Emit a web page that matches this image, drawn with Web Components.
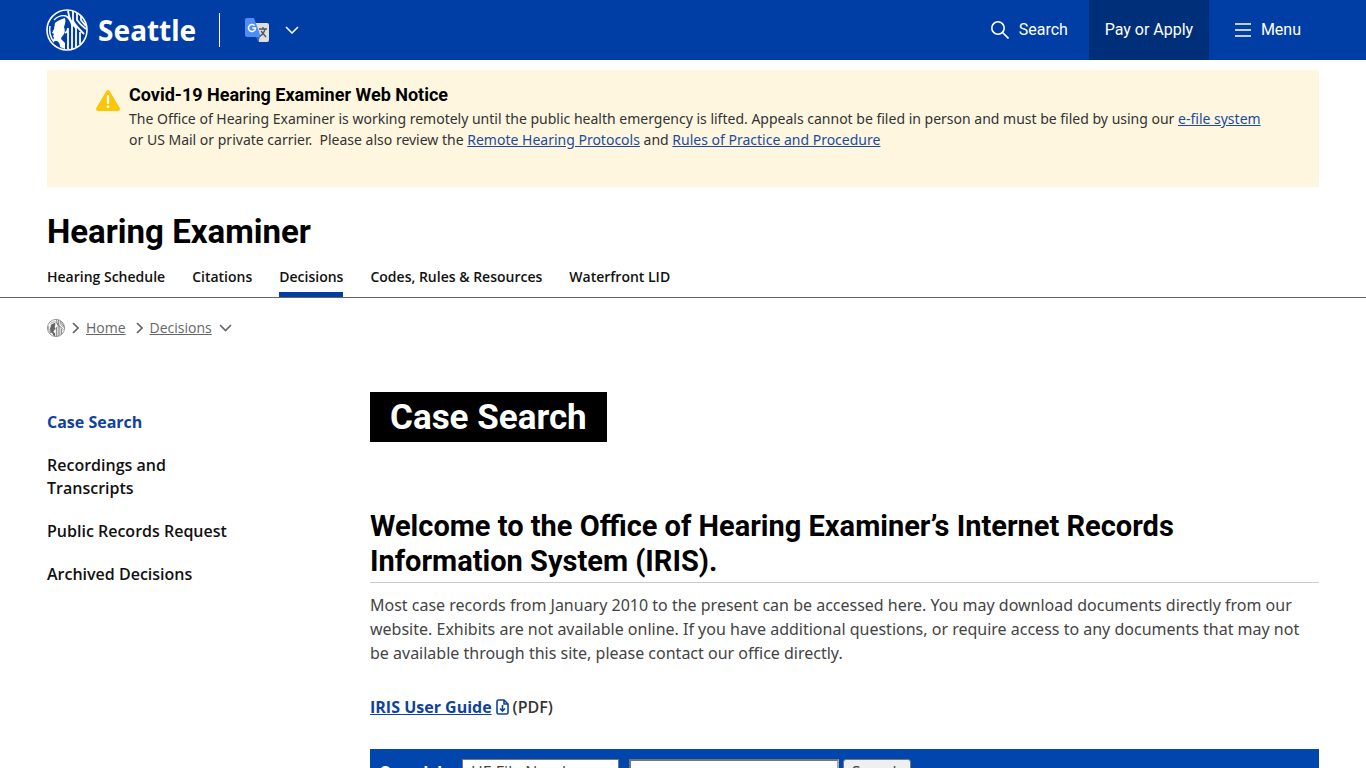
<!DOCTYPE html>
<html lang="en">
<head>
<meta charset="utf-8">
<meta name="viewport" content="width=device-width, initial-scale=1">
<title>Case Search - Hearing Examiner</title>
<style>
:root{--blue:#003da5;--navy:#002f7a;--gutter:47px;--display:Roboto,"Noto Sans",sans-serif}
body{margin:0;background:#fff;color:#444;font:16px/24px "Open Sans",sans-serif}
</style>
</head>
<body>
<seattle-page></seattle-page>
<script>
function define(name, html){
  const t=document.createElement('template');
  t.innerHTML='<style>*{box-sizing:border-box}:host{display:block}</style>'+html;
  customElements.define(name,class extends HTMLElement{
    constructor(){super();this.attachShadow({mode:'open'}).append(t.content.cloneNode(true));}
  });
}

define('city-seal',`
<style>:host{display:block;flex:none;width:42px;height:42px}svg{display:block;width:100%;height:100%}</style>
<svg viewBox="0 0 42 42" aria-hidden="true" fill="none" stroke="currentColor">
<circle cx="21" cy="21" r="20" stroke-width="1.6"/>
<path fill="currentColor" stroke="none" d="M9 14c2-2 6-4 10-5 1 3 0 6-1 9 1 3 1 5 0 7-1 2-3 3-3 5l4 4v6l-5-2c0-3-1-5-3-6l-3 0c-1-1-1-2 0-3l-1-2 1-2-2-1 2-4z"/>
<path stroke-width="1.4" d="M8 11c4-4 8-5 12-4M4 17c-1 6 0 11 4 16"/>
<path stroke-width="1.8" d="M22 20v20M26 16v24M30 18v20M34 23v12M20 7c3 2 5 5 6 9M22 2c1 7 4 13 8 17M27 2v10c2 4 5 7 11 13M31 4v7c2 3 5 6 9 9M35 7v4l5 6M19 24c2-1 3-2 3-5"/>
</svg>`);

define('site-header',`
<style>
:host{background:var(--blue);color:#fff}
header{display:flex;height:60px;padding:0 var(--gutter) 0 46px;align-items:center}
a,button{color:inherit;text-decoration:none;border:0;background:none;padding:0;font:16px/24px var(--display)}
.brand{display:flex;align-items:center;gap:10px;font:bold 28px/36px "Noto Sans",sans-serif;padding-right:23px;border-right:1px solid #fff;height:34px}
.lang{display:flex;align-items:center;gap:16px;margin-left:25px}
nav{display:flex;align-items:center;margin-left:auto}
.search{display:flex;align-items:center;gap:10px;margin-right:21px}
.pay{height:60px;width:120px;background:var(--navy);text-align:center;line-height:60px}
.menu{display:flex;align-items:center;gap:10px;margin:0 18px 0 26px}
svg{display:block}
</style>
<header>
<a class="brand" href="#"><city-seal></city-seal>Seattle</a>
<button class="lang" aria-label="Translate">
<svg width="24" height="24" viewBox="0 0 24 24"><path fill="#dedede" d="M9 5h13a2 2 0 0 1 2 2v15a2 2 0 0 1-2 2h-8z"/><path fill="#3167d4" d="M11 19h4l-2 5z"/><path fill="#4f8cf5" d="M2 0h7l7 19H2a2 2 0 0 1-2-2V2a2 2 0 0 1 2-2z"/><path d="M9.600 7.600A3.500 3.500 0 1 0 10.500 10H7.300" fill="none" stroke="#fff" stroke-width="1.500"/><path d="M14 11h8M18 9v2M20 11c-1 4-3 6-5 7M16 13l5 6" fill="none" stroke="#555" stroke-width="1.300"/></svg>
<svg width="14" height="8" viewBox="0 0 14 8"><path d="M1 1l6 6 6-6" fill="none" stroke="#fff" stroke-width="1.500"/></svg>
</button>
<nav aria-label="Main">
<button class="search"><svg width="18" height="18" viewBox="0 0 18 18" fill="none" stroke="#fff" stroke-width="1.600"><circle cx="7" cy="7" r="6.200"/><path d="M11.500 11.500l6 6"/></svg>Search</button>
<button class="pay">Pay or Apply</button>
<button class="menu"><svg width="16" height="14" viewBox="0 0 16 14"><path d="M0 1h16M0 7h16M0 13h16" stroke="#fff" stroke-width="1.600"/></svg>Menu</button>
</nav>
</header>`);

define('web-notice',`
<style>
:host{display:flex;gap:9px;margin:10px var(--gutter) 0;padding:12px 49px 37px;background:#fef6df;color:#333;font:14px/21px "Noto Sans",sans-serif}
svg{flex:none;margin-top:8px}
h2{margin:0;font:bold 18px/26px var(--display);color:#000}
p{margin:0}
</style>
<svg width="24" height="21" viewBox="0 0 24 21" aria-hidden="true"><path fill="#fac60a" d="M10.300 1a2 2 0 0 1 3.400 0l10 17a2 2 0 0 1-1.700 3H2a2 2 0 0 1-1.700-3z"/><path d="M12 6v7" stroke="#fff" stroke-width="2.200" stroke-linecap="round"/><circle cx="12" cy="16.800" r="1.400" fill="#fff"/></svg>
<div><h2><slot name="title"></slot></h2><p><slot></slot></p></div>`);

define('department-header',`
<style>
:host{border-bottom:1px solid #666;padding:25px var(--gutter) 0}
h1{margin:0 0 14px;font:bold 33px/40px var(--display);color:#000}
nav{display:flex;gap:27px}
a{display:block;color:#111;text-decoration:none;font-weight:600;font-size:14px;line-height:22px;padding-bottom:9px}
a[aria-current]{border-bottom:5px solid var(--blue);padding-bottom:4px}
</style>
<h1>Hearing Examiner</h1>
<nav aria-label="Department">
<a href="#">Hearing Schedule</a><a href="#">Citations</a><a href="#" aria-current="page">Decisions</a><a href="#">Codes, Rules &amp; Resources</a><a href="#">Waterfront LID</a>
</nav>`);

define('bread-crumbs',`
<style>
:host{display:flex;align-items:center;gap:7px;padding:20px var(--gutter);color:#666;font-size:14px;line-height:20px}
a{color:inherit}
city-seal{width:18px;height:18px}
.sep{margin-left:3px}
svg{fill:none;stroke:#666;stroke-width:1.700}
</style>
<city-seal></city-seal>
<svg width="7" height="12" viewBox="0 0 7 12"><path d="M1 1l5 5-5 5"/></svg>
<a href="#">Home</a>
<svg class="sep" width="7" height="12" viewBox="0 0 7 12"><path d="M1 1l5 5-5 5"/></svg>
<a href="#">Decisions</a>
<svg width="13" height="8" viewBox="0 0 13 8"><path d="M1 1l5.500 5.500L12 1"/></svg>`);

define('side-nav',`
<style>
nav{display:flex;flex-direction:column;gap:20px;padding-top:19px;max-width:180px}
a{color:#111;text-decoration:none;font-weight:600;font-size:16px;line-height:23px}
a[aria-current]{color:#0f429e;font-weight:700}
</style>
<nav aria-label="Section"><a href="#" aria-current="page">Case Search</a><a href="#">Recordings and Transcripts</a><a href="#">Public Records Request</a><a href="#">Archived Decisions</a></nav>`);

define('case-search-form',`
<style>
:host{background:#0046ad;color:#fff}
form{display:flex;align-items:center;padding:10px}
label{font:bold 17px/26px var(--display)}
select,input,button{height:26px;font:16px/22px "Open Sans",sans-serif;color:#444;border:1px solid #767676;padding:0 4px;background:#fff}
select{width:157px;margin:0 10px 0 0}
.by{width:82px;display:flex;flex:none}
input{width:210px;border-width:2px;border-color:#777 #aaa #aaa #777}
button{width:68px;margin-left:4px;background:#efefef;border-radius:3px}
</style>
<form><div class="by"><label for="field">Search by:</label></div>
<select id="field"><option>HE File Number</option><option>Party Name</option></select>
<input type="text" aria-label="Search value"><button type="button">Search</button></form>`);

define('case-search',`
<style>
h1{width:fit-content;margin:0;padding:2px 20px 0;background:#000;color:#fff;font:bold 35px/48px var(--display)}
h2{margin:67px 0 10px;padding-bottom:3px;border-bottom:1px solid #ccc;color:#000;font:bold 29px/35px var(--display)}
p{margin:0 0 30px}
.intro{padding-right:10px;font-family:"Noto Sans",sans-serif}
a{color:#0f429e;font-weight:700}
.guide{display:flex;align-items:center;gap:4px;color:#333;font-weight:600}
</style>
<h1>Case Search</h1>
<h2>Welcome to the Office of Hearing Examiner’s Internet Records Information System (IRIS).</h2>
<p class="intro">Most case records from January 2010 to the present can be accessed here. You may download documents directly from our website. Exhibits are not available online. If you have additional questions, or require access to any documents that may not be available through this site, please contact our office directly.</p>
<p class="guide"><a href="#">IRIS User Guide</a><svg width="13" height="16" viewBox="0 0 13 16" fill="none" stroke="#0f429e" stroke-width="1.600" aria-hidden="true"><path d="M2.500 1H8l4 4v8.500a1.500 1.500 0 0 1-1.500 1.500h-8A1.500 1.500 0 0 1 1 13.500v-11A1.500 1.500 0 0 1 2.500 1zM6.500 6v6M4 9.500L6.500 12 9 9.500M8 1v4h4"/></svg>(PDF)</p>
<case-search-form></case-search-form>`);

define('seattle-page',`
<style>
a{color:#1c4ba0}
.body{display:grid;grid-template-columns:minmax(0,293px) minmax(0,1fr);gap:30px;padding:34px var(--gutter) 40px}
</style>
<site-header></site-header>
<web-notice><span slot="title">Covid-19 Hearing Examiner Web Notice</span>The Office of Hearing Examiner is working remotely until the public health emergency is lifted. Appeals cannot be filed in person and must be filed by using our <a href="#">e-file system</a> or US Mail or private carrier.&nbsp; Please also review the <a href="#">Remote Hearing Protocols</a> and <a href="#">Rules of Practice and Procedure</a></web-notice>
<department-header></department-header>
<bread-crumbs></bread-crumbs>
<div class="body"><side-nav></side-nav><main><case-search></case-search></main></div>`);
</script>
</body>
</html>
